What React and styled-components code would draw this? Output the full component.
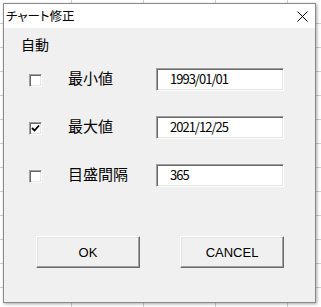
import React from 'react'
import styled, { createGlobalStyle } from 'styled-components'

const GlobalStyle = createGlobalStyle`
  html, body {
    margin: 0;
    padding: 0;
  }
  body {
    font-family: "Noto Sans CJK JP", "Noto Sans", sans-serif;
  }
`

const Desktop = styled.div`
  width: 321px;
  height: 307px;
  box-sizing: border-box;
  padding: 3px 5px 4px 3px;
  background-color: #ffffff;
  background-image:
    repeating-linear-gradient(to bottom, transparent 0 23px, #d0d0d0 23px 24px),
    repeating-linear-gradient(to right, transparent 0 71px, #d0d0d0 71px 72px);
  overflow: hidden;
`

const Window = styled.div`
  width: 313px;
  height: 300px;
  box-sizing: border-box;
  border: 1px solid #8a8a8a;
  background: #f0f0f0;
  box-shadow: 1px 1px 3px rgba(0, 0, 0, 0.35);
  display: flex;
  flex-direction: column;
`

const TitleBar = styled.div`
  height: 24px;
  flex-shrink: 0;
  background: #ffffff;
  display: flex;
  align-items: center;
  justify-content: space-between;
  padding: 0 7px 0 2px;
`

const Title = styled.span`
  font-size: 12.5px;
  line-height: 16px;
  color: #000;
  font-feature-settings: "palt";
`

const CloseButton = styled.div`
  width: 11px;
  height: 11px;
  display: flex;
`

const Content = styled.div`
  flex: 1;
  display: flex;
  flex-direction: column;
  padding-top: 6px;
`

const Heading = styled.div`
  margin-left: 17px;
  font-size: 14px;
  line-height: 20px;
  color: #000;
`

const Rows = styled.div`
  display: flex;
  flex-direction: column;
  gap: 25px;
  margin-top: 14px;
  margin-left: 25px;
`

const Row = styled.div`
  display: flex;
  align-items: center;
  height: 23px;
`

const CheckBox = styled.div`
  width: 13px;
  height: 13px;
  box-sizing: border-box;
  margin-top: 1px;
  background: #ffffff;
  border-top: 1px solid #a0a0a0;
  border-left: 1px solid #a0a0a0;
  border-right: 1px solid #ffffff;
  border-bottom: 1px solid #ffffff;
  box-shadow: inset 1px 1px 0 #696969, inset -1px -1px 0 #e3e3e3;
  display: flex;
  align-items: center;
  justify-content: center;
  margin-right: 26px;
`

const Label = styled.div`
  width: 88px;
  font-size: 15px;
  line-height: 20px;
  color: #000;
  margin-top: -3px;
`

const TextBox = styled.div`
  width: 128px;
  height: 23px;
  box-sizing: border-box;
  background: #ffffff;
  border-top: 1px solid #a0a0a0;
  border-left: 1px solid #a0a0a0;
  border-right: 1px solid #ffffff;
  border-bottom: 1px solid #ffffff;
  box-shadow: inset 1px 1px 0 #696969, inset -1px -1px 0 #e3e3e3;
  padding: 0 0 2px 13px;
  display: flex;
  align-items: center;
  font-size: 13px;
  letter-spacing: -1px;
  color: #000;
`

const Buttons = styled.div`
  display: flex;
  gap: 40px;
  margin-top: 49px;
  margin-left: 32px;
`

const Button = styled.div`
  width: 104px;
  height: 32px;
  box-sizing: border-box;
  background: #f0f0f0;
  border-top: 1px solid #ffffff;
  border-left: 1px solid #ffffff;
  border-right: 1px solid #696969;
  border-bottom: 1px solid #696969;
  box-shadow: inset -1px -1px 0 #a0a0a0, inset 1px 1px 0 #e3e3e3;
  display: flex;
  align-items: center;
  justify-content: center;
  font-family: "Liberation Sans", Arial, sans-serif;
  font-size: 13px;
  color: #000;
`

const Check = () => (
  <svg width="9" height="9" viewBox="0 0 9 9">
    <path d="M1 4 L3.5 6.5 L8 1.5" fill="none" stroke="#000" strokeWidth="1.8" />
  </svg>
)

const rows = [
  { label: '最小値', value: '1993/01/01', checked: false },
  { label: '最大値', value: '2021/12/25', checked: true },
  { label: '目盛間隔', value: '365', checked: false },
]

export default function App() {
  return (
    <>
      <GlobalStyle />
      <Desktop>
        <Window>
          <TitleBar>
            <Title>チャート修正</Title>
            <CloseButton>
              <svg width="11" height="11" viewBox="0 0 11 11">
                <path d="M0.5 0.5 L10.5 10.5 M10.5 0.5 L0.5 10.5" stroke="#000" strokeWidth="1" />
              </svg>
            </CloseButton>
          </TitleBar>
          <Content>
            <Heading>自動</Heading>
            <Rows>
              {rows.map((r) => (
                <Row key={r.label}>
                  <CheckBox>{r.checked && <Check />}</CheckBox>
                  <Label>{r.label}</Label>
                  <TextBox>{r.value}</TextBox>
                </Row>
              ))}
            </Rows>
            <Buttons>
              <Button>OK</Button>
              <Button>CANCEL</Button>
            </Buttons>
          </Content>
        </Window>
      </Desktop>
    </>
  )
}
